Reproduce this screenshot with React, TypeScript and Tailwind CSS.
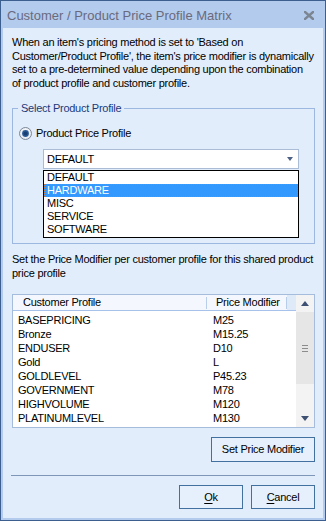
import React from "react";

const rows: [string, string][] = [
  ["BASEPRICING", "M25"],
  ["Bronze", "M15.25"],
  ["ENDUSER", "D10"],
  ["Gold", "L"],
  ["GOLDLEVEL", "P45.23"],
  ["GOVERNMENT", "M78"],
  ["HIGHVOLUME", "M120"],
  ["PLATINUMLEVEL", "M130"],
];

const items = ["DEFAULT", "HARDWARE", "MISC", "SERVICE", "SOFTWARE"];

function Radio() {
  return (
    <svg width="13" height="13" viewBox="0 0 13 13">
      <defs>
        <radialGradient id="rg" cx="50%" cy="40%" r="60%">
          <stop offset="0%" stopColor="#ffffff" />
          <stop offset="100%" stopColor="#dfe6ee" />
        </radialGradient>
      </defs>
      <circle cx="6.5" cy="6.5" r="6" fill="url(#rg)" stroke="#7b8796" strokeWidth="1" />
      <circle cx="6.5" cy="6.5" r="3.4" fill="#2a5a96" />
      <circle cx="6.5" cy="6.5" r="2" fill="#173f74" />
    </svg>
  );
}

function Tri({ up }: { up?: boolean }) {
  return (
    <svg width="8" height="5" viewBox="0 0 8 5">
      {up ? (
        <polygon points="0,5 8,5 4,0" fill="#3e5173" />
      ) : (
        <polygon points="0,0 8,0 4,5" fill="#3e5173" />
      )}
    </svg>
  );
}

export default function App() {
  return (
    <div
      className="w-[326px] h-[521px] border border-[#3d5f8f] bg-[#b3cbec] flex flex-col text-[11px] tracking-[-0.25px] text-black"
      style={{ fontFamily: '"Liberation Sans", Arial, sans-serif' }}
    >
      {/* Title bar */}
      <div className="h-[27px] flex items-center pl-[6px] pr-[11px] pt-[3px] shrink-0">
        <div className="flex-1 text-[13px] tracking-normal text-[#6a6a7e] whitespace-nowrap">
          Customer / Product Price Profile Matrix
        </div>
        <svg width="10" height="9" viewBox="0 0 10 9" className="-mt-[2px]">
          <path d="M1 1 L9 8 M9 1 L1 8" stroke="#7c8592" strokeWidth="2.4" strokeLinecap="square" />
        </svg>
      </div>

      {/* Content */}
      <div className="flex-1 mx-[2px] mb-[2px] bg-[#e2edfb] pl-[9px] pr-[8px] pt-[8px] flex flex-col">
        <p className="leading-[13.5px] whitespace-nowrap">
          When an item's pricing method is set to 'Based on
          <br />
          Customer/Product Profile', the item's price modifier is dynamically
          <br />
          set to a pre-determined value depending upon the combination
          <br />
          of product profile and customer profile.
        </p>

        <fieldset className="mt-[12px] border border-[#9db8e0] pb-[5px]">
          <legend className="ml-[5px] px-[3px] leading-[13px] text-[#1a3a7a]">Select Product Profile</legend>
          <div className="mt-[12px] h-[13px] flex items-center pl-[6px] gap-[4px]">
            <Radio />
            <span className="leading-[13px]">Product Price Profile</span>
          </div>
          <div className="ml-[30px] w-[256px] mt-[9px] h-[20px] border border-[#abbdd6] bg-white flex items-center pl-[3px] pr-[5px]">
            <span className="flex-1 uppercase">DEFAULT</span>
            <svg width="6" height="4" viewBox="0 0 6 4">
              <polygon points="0,0 6,0 3,4" fill="#4d6185" />
            </svg>
          </div>
          <div className="ml-[30px] w-[256px] mt-[1px] border border-black bg-white pb-[1px]">
            {items.map((it) =>
              it === "HARDWARE" ? (
                <div
                  key={it}
                  className="h-[13px] leading-[11px] pl-[2px] border border-dotted border-[#d9782c] bg-[#3399ff] text-white"
                >
                  {it}
                </div>
              ) : (
                <div key={it} className="h-[13px] leading-[13px] pl-[3px]">
                  {it}
                </div>
              )
            )}
          </div>
        </fieldset>

        <p className="mt-[9px] leading-[13.5px] whitespace-nowrap">
          Set the Price Modifier per customer profile for this shared product
          <br />
          price profile
        </p>

        {/* List view */}
        <div className="mt-[14px] h-[134px] border border-[#a5bcdc] bg-white flex">
          <div className="flex-1 flex flex-col">
            <div className="h-[16px] border-b border-[#a6c2ea] bg-[#f4f8fe] flex items-center">
              <div className="w-[193px] pl-[10px] leading-[15px]">Customer Profile</div>
              <div className="w-px h-[12px] bg-[#b8cde9]" />
              <div className="w-[79px] pl-[9px] leading-[15px]">Price Modifier</div>
              <div className="w-px h-[12px] bg-[#b8cde9]" />
              <div className="flex-1 h-full bg-[#dfeaf8]" />
            </div>
            <div className="pt-[2px]">
              {rows.map(([a, b]) => (
                <div key={a} className="h-[14px] flex items-center leading-[14px]">
                  <div className="w-[195px] pl-[5px]">{a}</div>
                  <div className="pl-[5px]">{b}</div>
                </div>
              ))}
            </div>
          </div>
          <div className="w-[18px] flex flex-col bg-[#f3f3f3]">
            <div className="h-[17px] flex items-center justify-center">
              <Tri up />
            </div>
            <div className="h-[72px] bg-[#e6e6e6] flex flex-col items-center justify-center gap-[2px]">
              <div className="w-[6px] h-px bg-[#8c8c8c]" />
              <div className="w-[6px] h-px bg-[#8c8c8c]" />
              <div className="w-[6px] h-px bg-[#8c8c8c]" />
            </div>
            <div className="flex-1" />
            <div className="h-[17px] flex items-center justify-center">
              <Tri />
            </div>
          </div>
        </div>

        <div className="mt-[9px] flex justify-end">
          <button className="w-[104px] h-[25px] border border-[#42709f] bg-[#e6f0fd] flex items-center justify-center">
            Set Price Modifier
          </button>
        </div>

        <div className="mt-[13px] -ml-px h-px bg-[#7e97b9]" />

        <div className="mt-[9px] flex justify-end gap-[8px]">
          <button className="w-[64px] h-[24px] border border-[#42709f] bg-[#e6f0fd] flex items-center justify-center">
            <span>
              <u className="underline-offset-[2px]">O</u>k
            </span>
          </button>
          <button className="w-[64px] h-[24px] border border-[#42709f] bg-[#e6f0fd] flex items-center justify-center">
            <span>
              <u className="underline-offset-[2px]">C</u>ancel
            </span>
          </button>
        </div>
      </div>
    </div>
  );
}
